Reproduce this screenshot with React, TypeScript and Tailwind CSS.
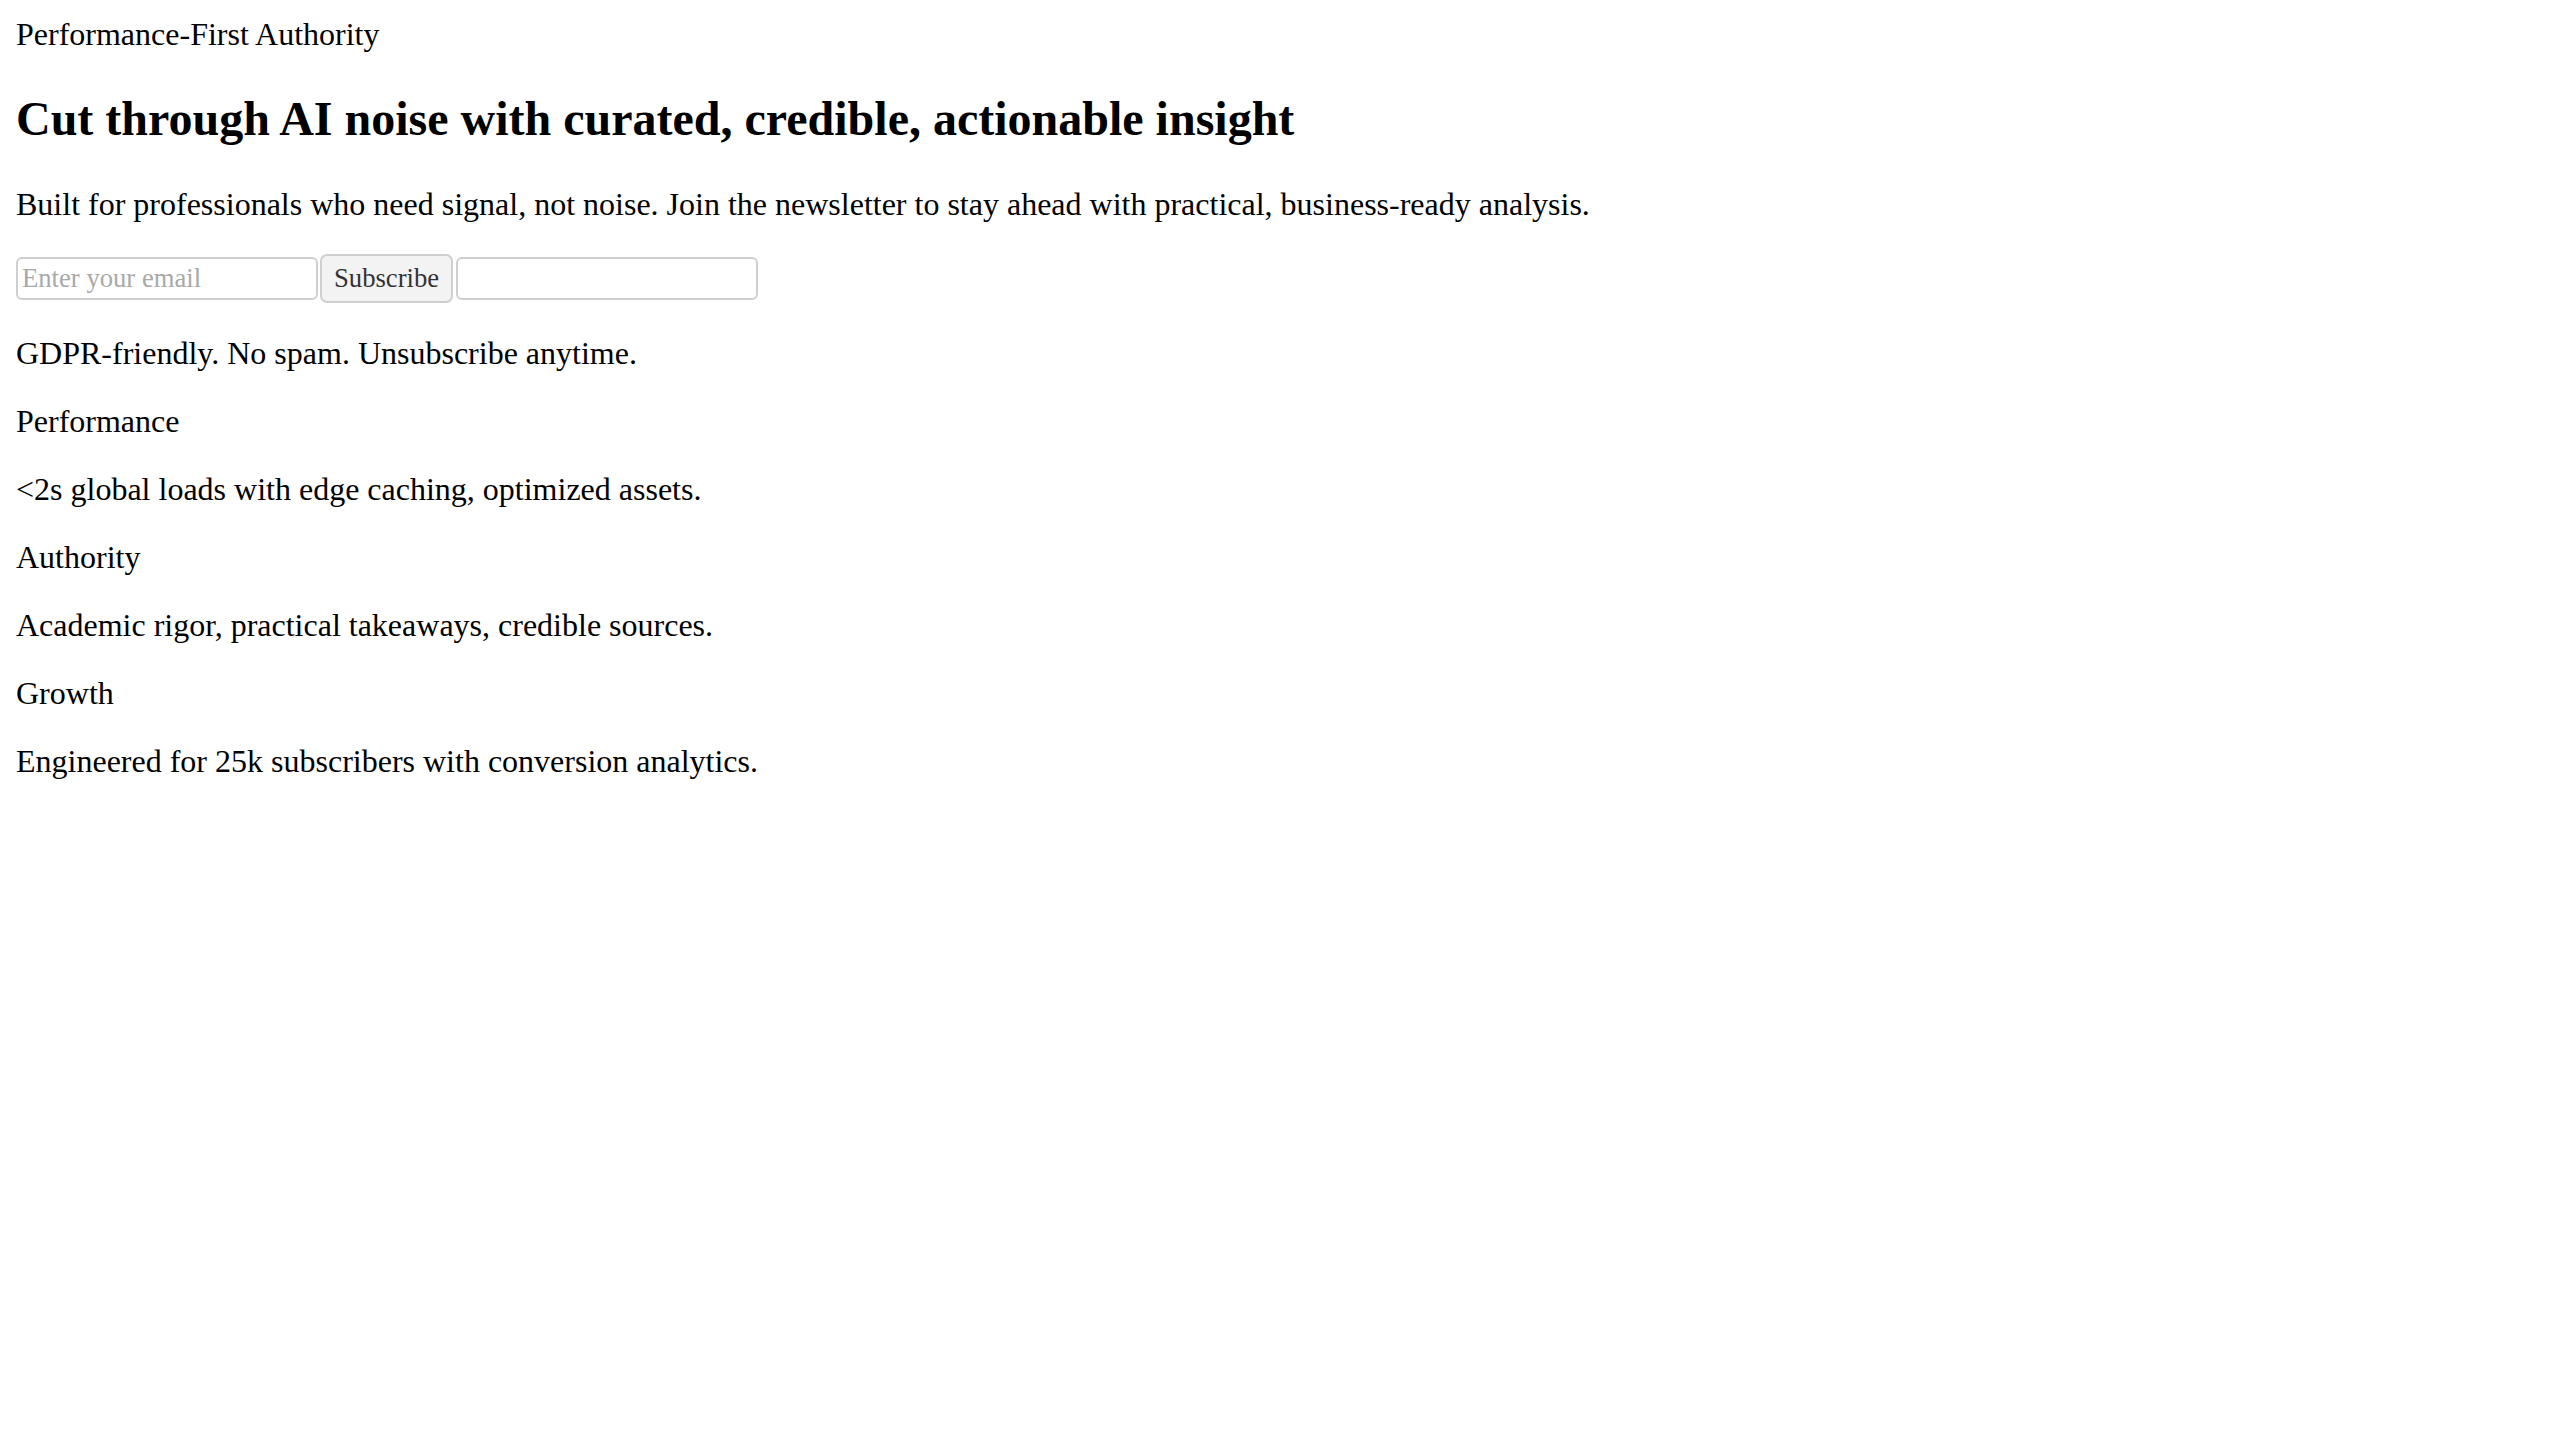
export default function App() {
  return (
    <div className="min-h-screen bg-white p-4 font-['Liberation_Serif','Times_New_Roman',serif] text-[32px] leading-[36px] text-black">
      {/* header */}
      <div>Performance-First Authority</div>

      {/* hero */}
      <section>
        <h1 className="my-[40px] text-[48px] font-bold leading-[54px]">
          Cut through AI noise with curated, credible, actionable insight
        </h1>
        <p className="my-8">
          Built for professionals who need signal, not noise. Join the newsletter to stay ahead with practical,
          business-ready analysis.
        </p>

        <form className="flex items-center gap-[2px]" onSubmit={(e) => e.preventDefault()}>
          <input
            type="email"
            placeholder="Enter your email"
            className="h-[43px] w-[302px] rounded-[6px] border-2 border-[#cfcfcf] bg-white px-1 font-['Liberation_Serif',serif] text-[26.67px] leading-[normal] text-black outline-none placeholder:text-[#a9a9a9]"
          />
          <button
            type="submit"
            className="h-[49px] w-[133px] rounded-[7px] border-2 border-[#cfcfcf] bg-[#f3f3f3] px-3 font-['Liberation_Serif',serif] text-[26.67px] leading-[normal] text-[#333]"
          >
            Subscribe
          </button>
          <input
            type="text"
            aria-label="company"
            className="ml-[1px] h-[43px] w-[302px] rounded-[6px] border-2 border-[#cfcfcf] bg-white px-1 font-['Liberation_Serif',serif] text-[26.67px] leading-[normal] outline-none"
          />
        </form>

        <p className="my-8">GDPR-friendly. No spam. Unsubscribe anytime.</p>
      </section>

      {/* pillars */}
      <section>
        <p className="my-8">Performance</p>
        <p className="my-8">&lt;2s global loads with edge caching, optimized assets.</p>
        <p className="my-8">Authority</p>
        <p className="my-8">Academic rigor, practical takeaways, credible sources.</p>
        <p className="my-8">Growth</p>
        <p className="my-8">Engineered for 25k subscribers with conversion analytics.</p>
      </section>
    </div>
  );
}
